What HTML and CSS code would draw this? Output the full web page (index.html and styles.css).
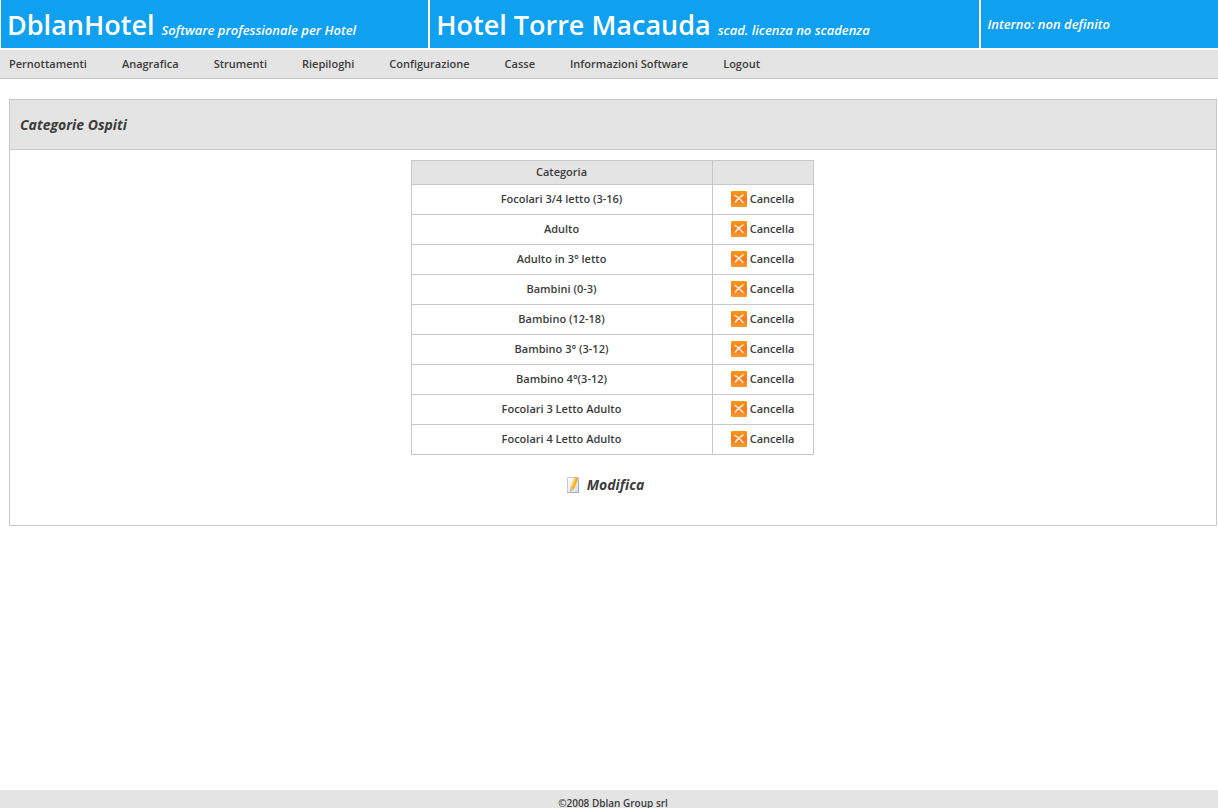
FILE: index.html
```html
<!DOCTYPE html>
<html lang="it">
<head>
<meta charset="utf-8">
<title>DblanHotel - Categorie Ospiti</title>
<link rel="stylesheet" href="styles.css">
</head>
<body>
<svg class="sprite" aria-hidden="true">
  <defs>
    <linearGradient id="orange" x1="0" y1="0" x2="0" y2="1">
      <stop offset="0" stop-color="#fb9a10"/>
      <stop offset="0.5" stop-color="#f47a20"/>
      <stop offset="1" stop-color="#fb9a2c"/>
    </linearGradient>
    <linearGradient id="paper" x1="0" y1="0" x2="1" y2="1">
      <stop offset="0" stop-color="#ffffff"/>
      <stop offset="1" stop-color="#d3dcec"/>
    </linearGradient>
    <symbol id="delete" viewBox="0 0 16 16">
      <rect width="16" height="16" rx="1" fill="url(#orange)"/>
      <path d="M4 4.5C6 5.5 9 8 12 11.500M12 4C9.500 5.500 6 8.500 4.500 11" fill="none" stroke="#ffe9d2" stroke-width="1.500" stroke-linecap="round"/>
    </symbol>
    <symbol id="edit" viewBox="0 0 16 16">
      <path d="M1.500 .5H12.500V15.500H1.500Z" fill="url(#paper)" stroke="#c3cad6"/>
      <path d="M1 15.500H13M12.500 4V16" stroke="#a3abba" fill="none"/>
      <path d="M8.500 0.500L12 2.500L8 12L4.500 14L4.700 10Z" fill="#fbae17"/>
      <path d="M8.500 0.500L10.300 1.600L6 11L4.700 10Z" fill="#ffd65c"/>
      <path d="M8.500 1L9 0L12.500 1.500L12 2.500Z" fill="#f09a4c"/>
      <path d="M4.700 10.500L7.500 12L4.500 14Z" fill="#eec3a4"/>
      <path d="M4.700 12.500L5.700 13.200L4.500 14Z" fill="#5a4a48"/>
    </symbol>
  </defs>
</svg>
<header class="banner">
  <div class="banner-cell"><h1 class="brand">DblanHotel</h1><em class="note">Software professionale per Hotel</em></div>
  <div class="banner-cell"><h2 class="brand">Hotel Torre Macauda</h2><em class="note">scad. licenza no scadenza</em></div>
  <div class="banner-cell banner-status"><em class="note">Interno: non definito</em></div>
</header>
<nav class="menu">
  <a href="#">Pernottamenti</a>
  <a href="#">Anagrafica</a>
  <a href="#">Strumenti</a>
  <a href="#">Riepiloghi</a>
  <a href="#">Configurazione</a>
  <a href="#">Casse</a>
  <a href="#">Informazioni Software</a>
  <a href="#">Logout</a>
</nav>
<main class="panel">
  <h3 class="panel-title">Categorie Ospiti</h3>
  <div class="panel-body">
    <table class="categories">
      <thead><tr><th class="name">Categoria</th><th class="action"></th></tr></thead>
      <tbody>
        <tr><td>Focolari 3/4 letto (3-16)</td><td><a class="delete" href="#"><svg class="icon"><use href="#delete"/></svg>Cancella</a></td></tr>
        <tr><td>Adulto</td><td><a class="delete" href="#"><svg class="icon"><use href="#delete"/></svg>Cancella</a></td></tr>
        <tr><td>Adulto in 3° letto</td><td><a class="delete" href="#"><svg class="icon"><use href="#delete"/></svg>Cancella</a></td></tr>
        <tr><td>Bambini (0-3)</td><td><a class="delete" href="#"><svg class="icon"><use href="#delete"/></svg>Cancella</a></td></tr>
        <tr><td>Bambino (12-18)</td><td><a class="delete" href="#"><svg class="icon"><use href="#delete"/></svg>Cancella</a></td></tr>
        <tr><td>Bambino 3° (3-12)</td><td><a class="delete" href="#"><svg class="icon"><use href="#delete"/></svg>Cancella</a></td></tr>
        <tr><td>Bambino 4°(3-12)</td><td><a class="delete" href="#"><svg class="icon"><use href="#delete"/></svg>Cancella</a></td></tr>
        <tr><td>Focolari 3 Letto Adulto</td><td><a class="delete" href="#"><svg class="icon"><use href="#delete"/></svg>Cancella</a></td></tr>
        <tr><td>Focolari 4 Letto Adulto</td><td><a class="delete" href="#"><svg class="icon"><use href="#delete"/></svg>Cancella</a></td></tr>
      </tbody>
    </table>
    <a class="edit" href="#"><svg class="icon"><use href="#edit"/></svg>Modifica</a>
  </div>
</main>
<footer class="footer">©2008 Dblan Group srl</footer>
</body>
</html>
```
FILE: styles.css
```css
* {
  box-sizing: border-box;
}

body {
  display: flex;
  flex-direction: column;
  min-height: 100vh;
  margin: 0;
  background: #fff;
  color: #3c3c3c;
  font: 600 11px/16px "Trebuchet MS", "Open Sans", "Noto Sans", sans-serif;
}

a {
  color: inherit;
  text-decoration: none;
}

a:hover {
  text-decoration: underline;
}

.sprite {
  position: absolute;
  width: 0;
  height: 0;
}

.icon {
  flex: none;
  width: 16px;
  height: 16px;
}

.banner {
  display: grid;
  grid-template-columns: 428fr 550fr 237fr;
  gap: 2px;
  height: 48px;
  padding-left: 1px;
  color: #fff;
}

.banner-cell {
  display: flex;
  align-items: baseline;
  gap: 7px;
  padding: 7px 6px 0;
  background: #10a0f0;
  white-space: nowrap;
}

.banner-status {
  align-items: center;
  padding-top: 0;
}

.brand {
  margin: 0;
  font-size: 27px;
  font-weight: 600;
  line-height: 36px;
}

.note {
  font-size: 13px;
  font-weight: 600;
}

.menu {
  display: flex;
  gap: 35px;
  margin-top: 2px;
  padding: 6px 9px;
  border-bottom: 1px solid #c8c8c8;
  background: #e4e4e4;
  white-space: nowrap;
}

.panel {
  margin: 20px 1px 0 9px;
  border: 1px solid #c8c8c8;
}

.panel-title {
  margin: 0;
  padding: 15px 10px 14px;
  border-bottom: 1px solid #c8c8c8;
  background: #e4e4e4;
  font-size: 14px;
  font-style: italic;
  font-weight: 700;
  line-height: 20px;
}

.panel-body {
  display: flex;
  flex-direction: column;
  align-items: center;
  padding: 10px 2px 30px 0;
}

.categories {
  border-collapse: collapse;
  text-align: center;
}

.categories th,
.categories td {
  height: 30px;
  padding: 0 0 1px;
  border: 1px solid #c8c8c8;
  font-weight: 600;
}

.categories th {
  height: 24px;
  background: #e4e4e4;
}

.name {
  width: 301px;
}

.action {
  width: 101px;
}

.delete {
  display: flex;
  align-items: center;
  justify-content: center;
  gap: 3px;
}

.edit {
  display: flex;
  align-items: center;
  gap: 5px;
  margin-top: 20px;
  padding-right: 14px;
  font-size: 14px;
  font-style: italic;
  font-weight: 700;
  line-height: 20px;
}

.footer {
  height: 18px;
  margin-top: auto;
  padding: 5px 0 0 8px;
  background: #e4e4e4;
  font-size: 10px;
  line-height: 16px;
  text-align: center;
}
```
